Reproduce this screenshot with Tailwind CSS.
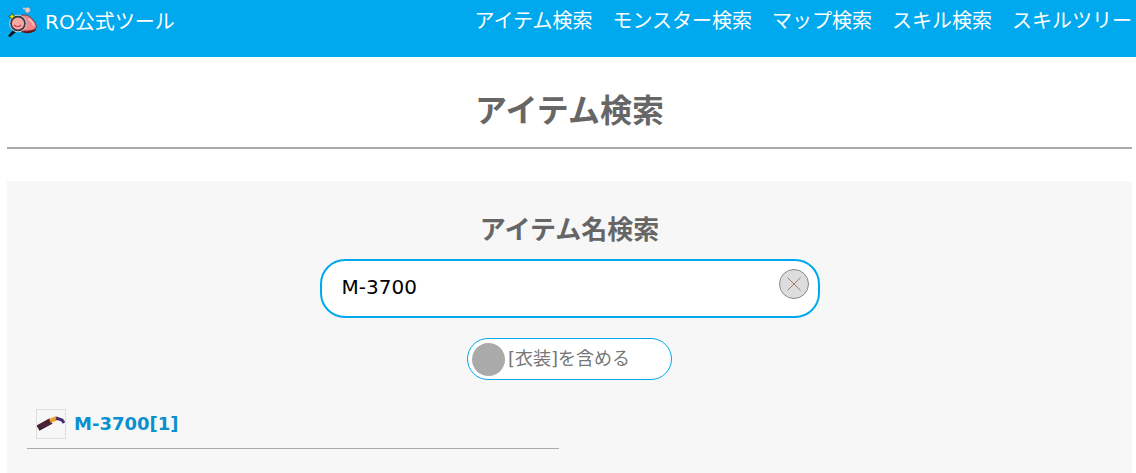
<!DOCTYPE html>
<html lang="ja">
<head>
  <meta charset="UTF-8" />
  <title>RO公式ツール</title>
  <script src="https://cdn.jsdelivr.net/npm/@tailwindcss/browser@4"></script>
</head>
<body class="bg-white h-[473px] overflow-hidden font-['DejaVu_Sans','Noto_Sans_CJK_JP',sans-serif] text-[#666]">
  <header class="h-[57px] bg-[#00a9ee] flex justify-between pl-[7px] pr-[4px] text-white">
    <a class="flex items-start pt-[7px] gap-[6px]">
      <svg width="32" height="32" viewBox="7 7 32 32">
        <path d="M8 36l5-6 3 2-6 5z" fill="#111"/>
        <path d="M19 31c6 3 13 3 17-1l-3-4-13 1z" fill="#5a1414"/>
        <path d="M19 16c5-2 10-1 13 3 3 3 5 6 4 9-2 3-11 4-17 2z" fill="#f4858a" stroke="#8a2f38" stroke-width="1"/>
        <path d="M28 19c3 1 5 4 6 7" stroke="#fbc4c4" stroke-width="1.500" fill="none"/>
        <circle cx="18" cy="23.500" r="7" fill="#f9a7a3" stroke="#3a3a46" stroke-width="1.800"/>
        <circle cx="18" cy="23.500" r="8.400" fill="none" stroke="#c3ccd4" stroke-width="1"/>
        <path d="M14 25c2 2 5 2 7 0" stroke="#c23a48" stroke-width="1.200" fill="none"/>
        <path d="M12 13l1 2.500 2.500 1-2.500 1-1 2.500-1-2.500-2.500-1 2.500-1z" fill="#ffe600" stroke="#222" stroke-width=".5"/>
        <circle cx="27.500" cy="10" r="2.500" fill="#f8c4c4" stroke="#c98" stroke-width=".5"/>
        <circle cx="24" cy="8.500" r="1" fill="#f8d5d5"/>
      </svg>
      <span class="text-[20px] leading-[30px]">RO公式ツール</span>
    </a>
    <nav class="flex gap-[20px] pt-[6px] text-[20px] leading-[30px]">
      <a>アイテム検索</a>
      <a>モンスター検索</a>
      <a>マップ検索</a>
      <a>スキル検索</a>
      <a>スキルツリー</a>
    </nav>
  </header>
  <main class="pl-[7px] pr-[4px]">
    <h1 class="text-center text-[32px] font-bold leading-[45px] pt-[32px] pb-[13px] box-content border-b-2 border-[#aaa]">アイテム検索</h1>
    <section class="mt-[32px] bg-[#f7f7f7] h-[292px] pt-[31px] flex flex-col items-center">
      <h2 class="text-[26px] font-bold leading-[36px]">アイテム名検索</h2>
      <div class="mt-[11px] w-[500px] h-[59px] bg-white border-2 border-[#00a9ee] rounded-[25px] flex items-start justify-between pl-[20px] pr-[9px] pt-[8px]">
        <span class="text-[20px] leading-[36px] text-black">M-3700</span>
        <span class="w-[30px] h-[30px] rounded-full bg-[#ddd] border border-[#888] flex items-center justify-center">
          <svg width="16" height="16" viewBox="0 0 16 16"><path d="M1.500 1.500l13 13M14.500 1.500l-13 13" stroke="#a5806f" stroke-width="1"/></svg>
        </span>
      </div>
      <div class="mt-[20px] w-[205px] h-[42px] bg-white border border-[#00a9ee] rounded-[21px] flex items-center pl-[4px] gap-[3px]">
        <span class="w-[33px] h-[33px] rounded-full bg-[#aaa]"></span>
        <span class="text-[18px] leading-[26px] text-[#777] -mt-[1px]">[衣装]を含める</span>
      </div>
      <div class="self-start mt-[28px] ml-[20px] w-[532px] h-[41px] border-b border-[#aaa] flex items-start">
        <span class="ml-[9px] mt-[1px] w-[30px] h-[30px] border border-[#ddd] flex items-center justify-center">
          <svg width="28" height="28" viewBox="0 0 28 28">
            <path d="M1 18l13-7" stroke="#4a2238" stroke-width="6" fill="none"/>
            <path d="M13 11l7-3" stroke="#f0a030" stroke-width="4.500" fill="none"/>
            <path d="M19 8l6 2 2 3" stroke="#4a2a70" stroke-width="3" fill="none"/>
          </svg>
        </span>
        <span class="ml-[8px] mt-[2px] text-[18px] font-bold leading-[28px] text-[#0a8fcf]">M-3700[1]</span>
      </div>
    </section>
  </main>
</body>
</html>
